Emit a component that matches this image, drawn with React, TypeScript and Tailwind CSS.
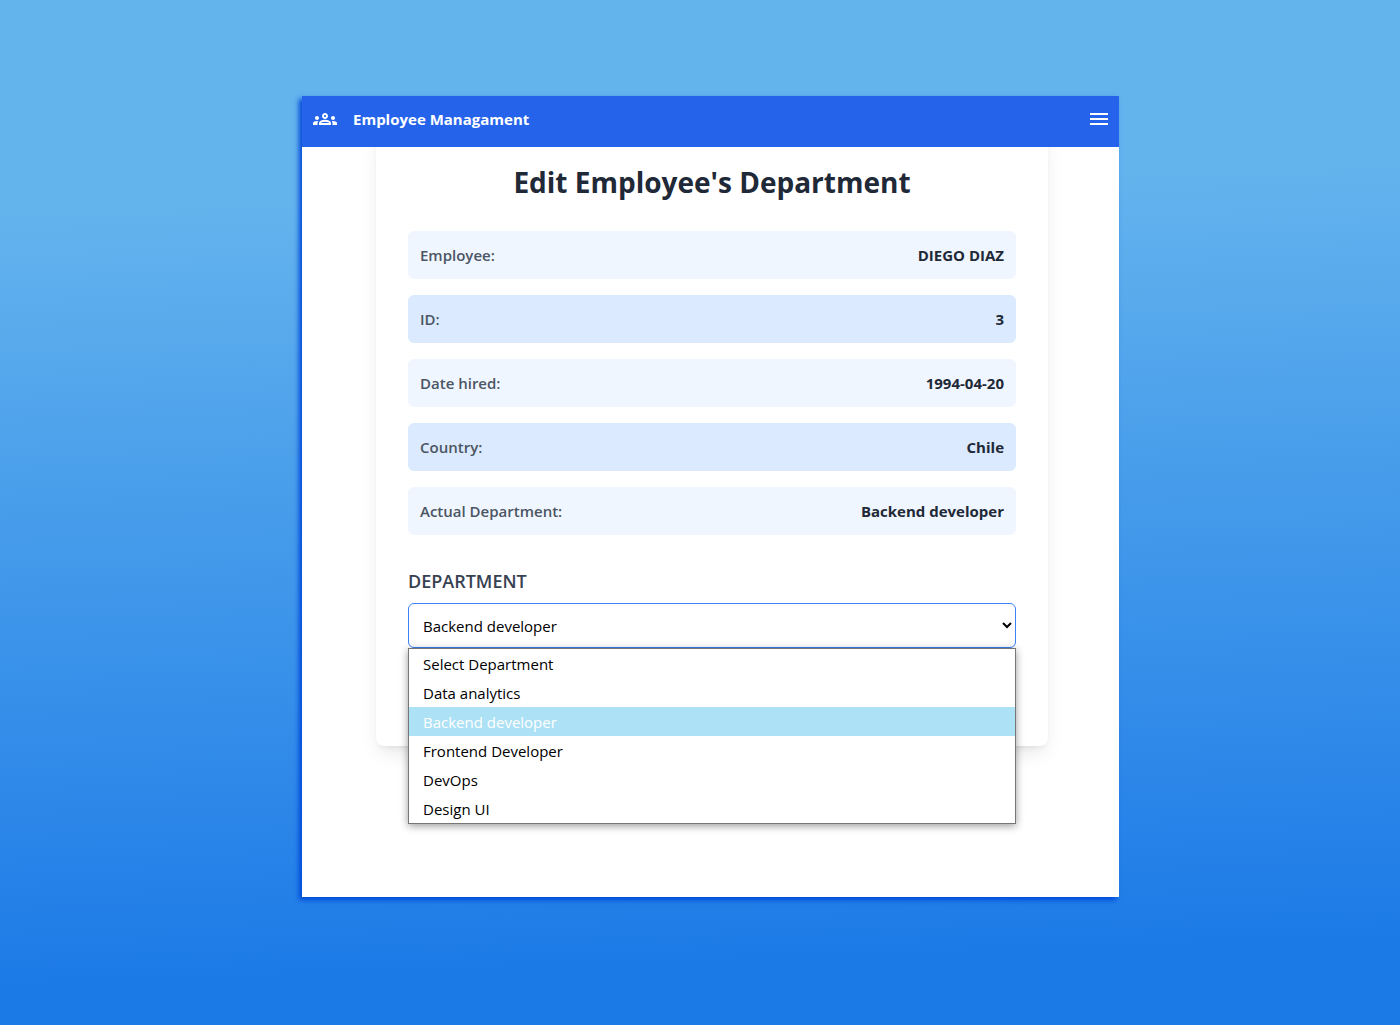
import { useState } from "react";
import { MdMenu, MdOutlineGroups } from "react-icons/md";

const details = [
  { label: "Employee:", value: "DIEGO DIAZ" },
  { label: "ID:", value: "3" },
  { label: "Date hired:", value: "1994-04-20" },
  { label: "Country:", value: "Chile" },
  { label: "Actual Department:", value: "Backend developer" },
];

const departments = [
  "Select Department",
  "Data analytics",
  "Backend developer",
  "Frontend Developer",
  "DevOps",
  "Design UI",
];

function Header() {
  return (
    <header className="relative z-10 flex h-[51px] shrink-0 items-start justify-between bg-[#2563eb] px-2 pt-[11px] text-white">
      <div className="flex items-center gap-4">
        <MdOutlineGroups className="ml-[3px] size-6" aria-hidden="true" />
        <span className="text-[15px] leading-6 font-bold">Employee Managament</span>
      </div>
      <button type="button" aria-label="Open menu">
        <MdMenu className="size-6" />
      </button>
    </header>
  );
}

function DepartmentField() {
  const [department, setDepartment] = useState("Backend developer");
  return (
    <div className="mt-8 flex flex-col">
      <label htmlFor="department" className="mb-2 text-[18px] leading-7 font-semibold text-[#374151]">
        DEPARTMENT
      </label>
      <div className="relative">
        <select
          id="department"
          value={department}
          onChange={(e) => setDepartment(e.target.value)}
          className="block h-[45px] w-full rounded-md border border-[#3b82f6] bg-white px-[10px] text-[15px] text-black outline-none"
        >
          {departments.map((name) => (
            <option key={name}>{name}</option>
          ))}
        </select>
        <div
          role="listbox"
          aria-label="Department options"
          className="absolute inset-x-0 top-full z-20 border border-[#767676] bg-white shadow-[0_2px_8px_rgba(0,0,0,0.4)]"
        >
          {departments.map((name) => (
            <button
              key={name}
              type="button"
              role="option"
              aria-selected={name === department}
              onClick={() => setDepartment(name)}
              className="block h-[29px] w-full px-[14px] text-left text-[15px] leading-[31px] text-black aria-selected:bg-[#ade1f5] aria-selected:text-white"
            >
              {name}
            </button>
          ))}
        </div>
      </div>
    </div>
  );
}

export default function App() {
  return (
    <div className="flex min-h-screen flex-col items-center bg-[linear-gradient(178deg,#63b3ed_20%,#1c7ae7_92%)] py-24 pl-[21px] font-['Open_Sans','Noto_Sans',sans-serif]">
      <div className="flex min-h-[801px] w-full max-w-[817px] flex-col bg-white shadow-[-3px_3px_5px_#0048d8]">
        <Header />
        <main className="flex justify-center px-4 pl-[19px]">
          <section className="-mt-4 w-full max-w-2xl rounded-lg px-8 pt-[33px] pb-[98px] shadow-[0_10px_20px_-4px_rgba(0,0,0,0.1),0_4px_6px_-4px_rgba(0,0,0,0.1)]">
            <h1 className="mb-[31px] text-center text-[28px] leading-9 font-bold text-[#1f2937]">
              Edit Employee's Department
            </h1>
            <dl className="flex flex-col gap-4">
              {details.map(({ label, value }) => (
                <div
                  key={label}
                  className="flex items-center justify-between rounded-md bg-[#eff6ff] p-3 text-[15px] leading-6 even:bg-[#dbeafe]"
                >
                  <dt className="font-semibold text-[#4b5563]">{label}</dt>
                  <dd className="font-bold text-[#1f2937]">{value}</dd>
                </div>
              ))}
            </dl>
            <DepartmentField />
          </section>
        </main>
      </div>
    </div>
  );
}
